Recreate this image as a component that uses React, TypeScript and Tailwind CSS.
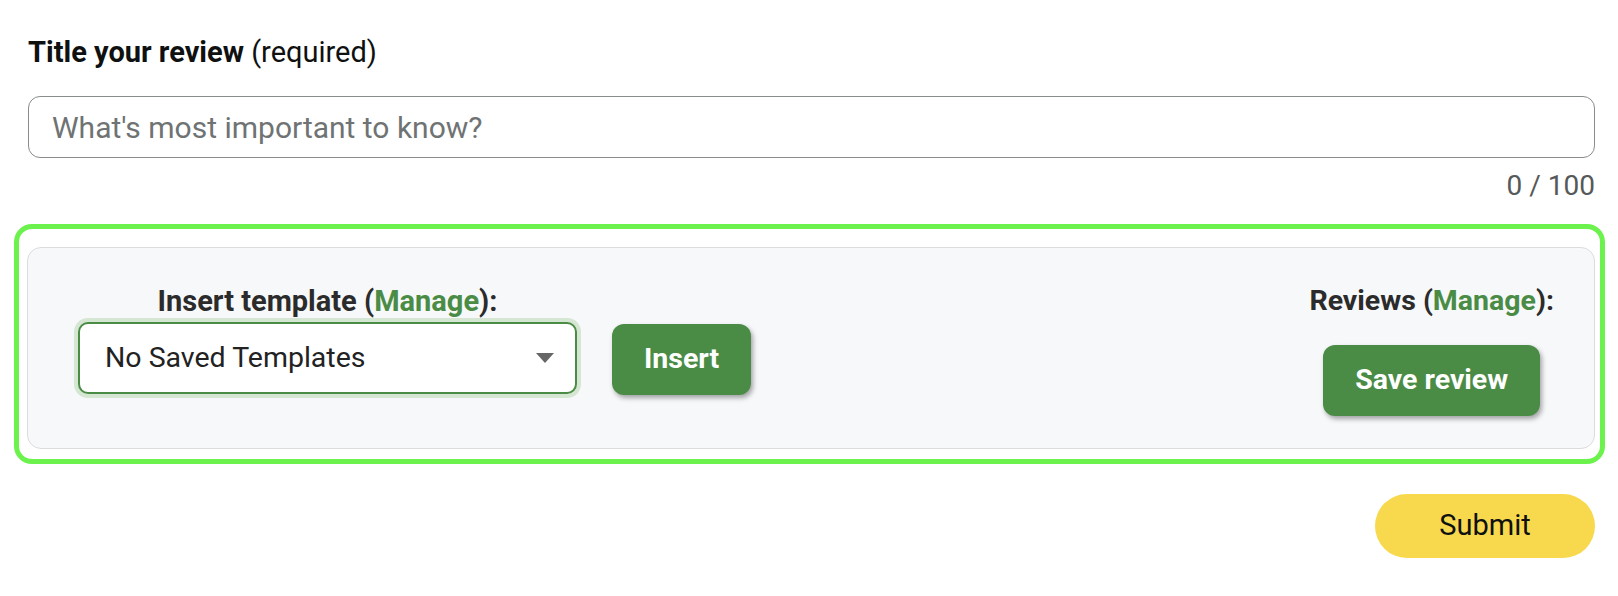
import React from "react";

export default function App() {
  return (
    <div
      className="w-[1618px] h-[596px] bg-white pl-[28px] pr-[23px] pt-[38px]"
      style={{ fontFamily: "Roboto, 'Noto Sans', sans-serif" }}
    >
      <div className="text-[29px] leading-[28px] text-[#0f1111]">
        <span className="font-bold">Title your review</span> (required)
      </div>
      <div className="mt-[30px] h-[62px] rounded-[12px] border border-[#888c8c] flex items-center pl-[23px]">
        <span className="text-[30px] text-[#6f7373]">What's most important to know?</span>
      </div>
      <div className="mt-[14px] text-right text-[28px] leading-[28px] text-[#565959]">0 / 100</div>

      <div className="mt-[24px] -ml-[14px] -mr-[10px] rounded-[18px] border-[5px] border-[#6cf24d] pt-[18px] pl-[8px] pr-[5px] pb-[10px]">
        <div className="h-[202px] rounded-[14px] border border-[#dcdcdc] bg-[#f7f8fa] flex justify-between items-start pl-[50px] pr-[40px] pt-[38px]">
          <div className="flex items-end gap-[35px]">
            <div className="flex flex-col items-center">
              <div className="text-[29px] leading-[30px] font-bold text-[#2b2b2b]">
                Insert template (<span className="text-[#4a8c45]">Manage</span>):
              </div>
              <div className="mt-[6px] w-[499px] h-[72px] rounded-[10px] border-2 border-[#4a8c45] bg-white shadow-[0_0_0_4px_#d5e6d3] flex items-center justify-between pl-[25px] pr-[21px]">
                <span className="text-[28.5px] text-[#222]">No Saved Templates</span>
                <svg width="18" height="10" viewBox="0 0 18 10">
                  <path d="M0 0 L18 0 L9 10 Z" fill="#666" />
                </svg>
              </div>
            </div>
            <button className="w-[139px] h-[71px] mb-[-1px] rounded-[12px] bg-[#4a8c45] text-white font-bold text-[28.5px] shadow-[2px_3px_5px_rgba(0,0,0,0.35)]">
              Insert
            </button>
          </div>
          <div className="flex flex-col items-center">
            <div className="text-[28.5px] leading-[30px] font-bold text-[#2b2b2b]">
              Reviews (<span className="text-[#4a8c45]">Manage</span>):
            </div>
            <button className="mt-[29px] w-[217px] h-[71px] rounded-[12px] bg-[#4a8c45] text-white font-bold text-[28.5px] shadow-[2px_3px_5px_rgba(0,0,0,0.35)]">
              Save review
            </button>
          </div>
        </div>
      </div>

      <div className="mt-[30px] flex justify-end">
        <button className="w-[220px] h-[64px] rounded-full bg-[#f8d94d] text-[29px] text-[#0f1111]">
          Submit
        </button>
      </div>
    </div>
  );
}
